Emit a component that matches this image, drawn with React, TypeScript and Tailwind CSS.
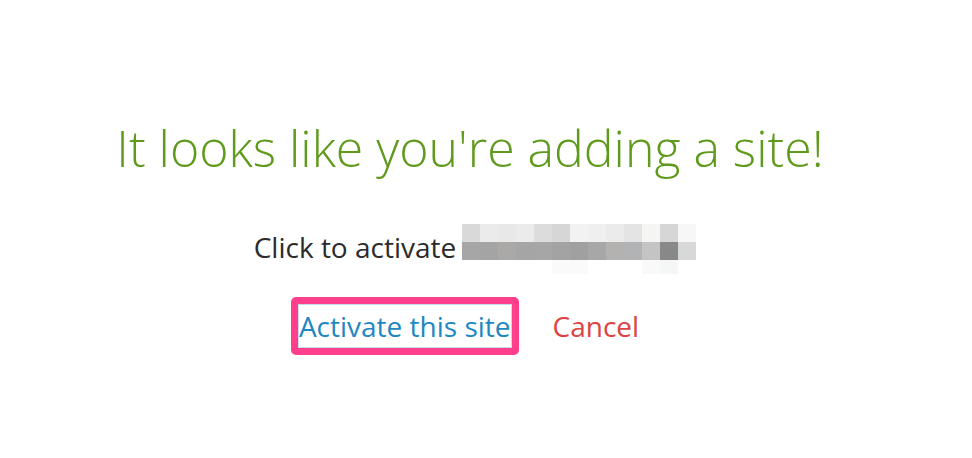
import React from 'react';

const blurRows: string[][] = [
  ['#d9d9d9', '#ebebeb', '#e8e8e8', '#ebebeb', '#dcdcdc', '#d6d6d6', '#f2f2f2', '#efefef', '#ebebeb', '#e4e4e4', '#f5f5f3', '#d6d6d6', '#f7f7f7'],
  ['#a6a6a6', '#a4a4a4', '#aaa9a7', '#a5a5a5', '#a6a6a6', '#a3a3a3', '#a0a0a0', '#a7a7a7', '#b4b2b0', '#b2b3b5', '#c4c4c4', '#888888', '#d7d9d9'],
  ['#ffffff', '#ffffff', '#ffffff', '#ffffff', '#ffffff', '#fafafa', '#fafafa', '#ffffff', '#ffffff', '#ffffff', '#f9f9f9', '#f5f6f6', '#ffffff'],
];

const BlurredUrl: React.FC = () => (
  <span className="inline-flex flex-col align-middle">
    {blurRows.map((row, r) => (
      <span key={r} className={r === 2 ? 'flex h-[14px]' : 'flex h-[18px]'}>
        {row.map((c, i) => (
          <span key={i} className="w-[18px] h-full" style={{ backgroundColor: c }} />
        ))}
      </span>
    ))}
  </span>
);

const App: React.FC = () => {
  return (
    <div className="w-[972px] h-[458px] bg-white pr-[32px] font-['Open_Sans',sans-serif]">
      <div className="flex flex-col items-center pt-[110px]">
        <h1 className="text-[50px] font-light text-[#5f9a1c] leading-[76px]">
          It looks like you're adding a site!
        </h1>

        <div className="flex items-start mt-[38px] text-[28px] text-[#2b2b2b] leading-[36px] pl-[10px]">
          <span className="mt-[5px]">Click to activate</span>
          <span className="ml-[6px]">
            <BlurredUrl />
          </span>
        </div>

        <div className="flex items-center mt-[23px] text-[28px] -ml-[10px]">
          <span className="inline-block border-[7px] border-[#ff3f8c] rounded-[5px]">
            <span className="block border border-[#c4dcf2] leading-[42px] text-[#1e88c2]">
              Activate this site
            </span>
          </span>
          <span className="ml-[34px] text-[#dc4343]">Cancel</span>
        </div>
      </div>
    </div>
  );
};

export default App;
